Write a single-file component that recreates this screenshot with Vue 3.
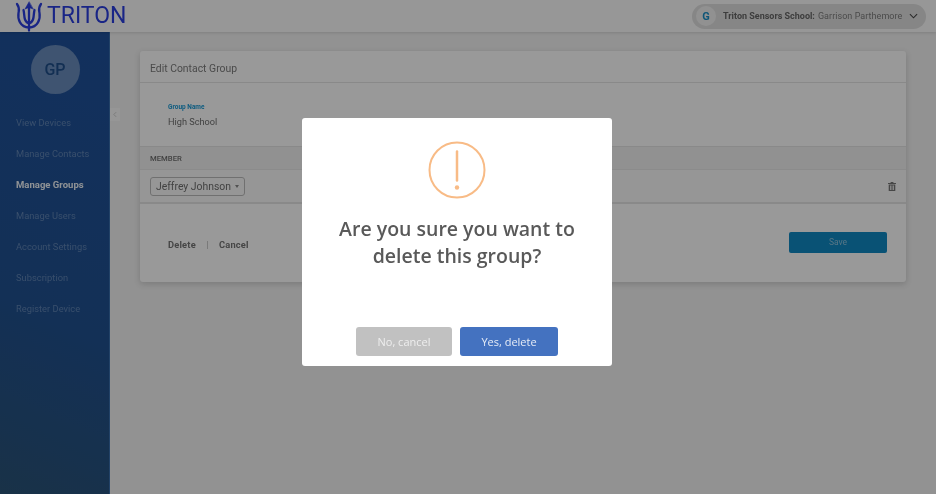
<script setup>
const nav = [
  { label: 'View Devices' },
  { label: 'Manage Contacts' },
  { label: 'Manage Groups', active: true },
  { label: 'Manage Users' },
  { label: 'Account Settings' },
  { label: 'Subscription' },
  { label: 'Register Device' },
]
</script>

<template>
  <div class="root">
    <div class="app">
      <header class="topbar">
        <div class="brand">
          <svg class="trident" viewBox="15 0 28 31" width="28" height="31" fill="none" stroke="#2a3ee0" stroke-width="2.3" stroke-linecap="round">
            <path d="M29 6V29.5" />
            <path d="M29 1L25 8L29 6.5L33 8Z" fill="#2a3ee0" stroke-width="0.6" />
            <path d="M23.5 9C24.5 13 24 16 25 18.5C26 21 27.5 22 29 22C30.5 22 32 21 33 18.5C34 16 33.5 13 34.5 9" />
            <path d="M17 3C20 7 19 9 18.5 12C17.5 18 20 26 29 26.5C38 26 40.5 18 39.5 12C39 9 38 7 41 3" />
          </svg>
          <span class="brand-name">TRITON</span>
        </div>
        <div class="account">
          <span class="account-badge">G</span>
          <span class="account-school">Triton Sensors School:</span>
          <span class="account-user">Garrison Parthemore</span>
          <svg class="chevron" viewBox="0 0 10 6" width="9" height="6" fill="none" stroke="#444" stroke-width="1.2">
            <path d="M1 1L5 5L9 1" />
          </svg>
        </div>
      </header>

      <div class="body">
        <aside class="sidebar">
          <div class="avatar">GP</div>
          <nav class="nav">
            <a v-for="item in nav" :key="item.label" class="nav-item" :class="{ active: item.active }">{{ item.label }}</a>
          </nav>
        </aside>

        <div class="collapse">
          <svg viewBox="0 0 5 8" width="4" height="7" fill="none" stroke="#c4c4c4" stroke-width="1">
            <path d="M4 1L1 4L4 7" />
          </svg>
        </div>

        <main class="main">
          <section class="card">
            <h2 class="card-title">Edit Contact Group</h2>
            <div class="field">
              <label class="field-label">Group Name</label>
              <div class="field-value">High School</div>
            </div>
            <div class="member-head">MEMBER</div>
            <div class="member-row">
              <div class="select">
                <span>Jeffrey Johnson</span>
                <i class="caret"></i>
              </div>
              <svg class="trash" viewBox="0 0 8 9" width="8" height="9" fill="#777">
                <path d="M2.6 0H5.4V1H8V2H0V1H2.6ZM.7 2.6H7.3V9H.7ZM2.2 3.6V8H3V3.6ZM3.6 3.6V8H4.4V3.6ZM5 3.6V8H5.8V3.6Z" fill-rule="evenodd" />
              </svg>
            </div>
            <div class="card-foot">
              <div class="links">
                <a class="link">Delete</a>
                <span class="sep"></span>
                <a class="link">Cancel</a>
              </div>
              <button class="save">Save</button>
            </div>
          </section>
        </main>
      </div>
    </div>

    <div class="overlay">
      <div class="modal">
        <svg class="warn" viewBox="0 0 58 58" width="58" height="58" fill="none" stroke="#f8bb86" stroke-width="2">
          <circle cx="29" cy="29" r="27.5" />
          <path d="M29 10.5V39.5" stroke-linecap="round" stroke-width="2.5" />
          <circle cx="29" cy="46.5" r="2.2" fill="#f8bb86" stroke="none" />
        </svg>
        <h3 class="modal-title">Are you sure you want to<br />delete this group?</h3>
        <div class="modal-actions">
          <button class="btn btn-cancel">No, cancel</button>
          <button class="btn btn-confirm">Yes, delete</button>
        </div>
      </div>
    </div>
  </div>
</template>

<style>
html, body { margin: 0; overflow: hidden; }
</style>

<style scoped>
.root {
  position: relative;
  width: 936px;
  height: 494px;
  overflow: hidden;
  font-family: Roboto, "Liberation Sans", sans-serif;
}
.app {
  width: 936px;
  height: 494px;
  display: flex;
  flex-direction: column;
  background: #f3f3f3;
  filter: blur(0.6px);
}
.topbar {
  height: 32px;
  flex: none;
  display: flex;
  align-items: center;
  justify-content: space-between;
  padding: 0 10px 0 15px;
  background: #fcfcfc;
  box-shadow: 0 1px 3px rgba(0, 0, 0, 0.12);
  box-sizing: border-box;
  position: relative;
  z-index: 1;
}
.brand { display: flex; align-items: center; gap: 4px; }
.brand-name {
  font-size: 23px;
  line-height: 32px;
  color: #2a3ee0;
}
.account {
  width: 234px;
  height: 25px;
  box-sizing: border-box;
  border-radius: 13px;
  background: #e0e0e0;
  display: flex;
  align-items: center;
  padding-left: 4px;
  font-size: 9px;
}
.account-badge {
  width: 20px;
  height: 20px;
  border-radius: 50%;
  background: #f2f2f2;
  color: #1a90c8;
  font-size: 11px;
  font-weight: 700;
  display: flex;
  align-items: center;
  justify-content: center;
  margin-right: 7px;
}
.account-school { font-weight: 700; color: #666; margin-right: 3px; }
.account-user { color: #7c7c7c; letter-spacing: 0.05px; }
.chevron { margin-left: 7px; }
.body { flex: 1; display: flex; min-height: 0; position: relative; }
.sidebar {
  width: 110px;
  flex: none;
  box-sizing: border-box;
  padding-top: 13px;
  background: linear-gradient(205deg, #1f519c 0%, #205090 60%, #2a5478 100%);
  box-shadow: inset -1px 0 0 #3a6eac;
  display: flex;
  flex-direction: column;
}
.avatar {
  width: 49px;
  height: 49px;
  border-radius: 50%;
  margin: 0 auto;
  background: #6a8cbc;
  color: #1f4f8a;
  font-size: 16px;
  font-weight: 500;
  display: flex;
  align-items: center;
  justify-content: center;
}
.nav { display: flex; flex-direction: column; margin-top: 12.5px; }
.nav-item {
  height: 31.1px;
  line-height: 31px;
  padding-left: 16px;
  font-size: 9.3px;
  letter-spacing: 0.02px;
  color: #5f84b4;
  white-space: nowrap;
}
.nav-item.active { color: #eef3f8; font-weight: 700; font-size: 9.5px; }
.collapse {
  position: absolute;
  left: 110px;
  top: 76px;
  width: 10px;
  height: 13px;
  background: #fafafa;
  display: flex;
  align-items: center;
  justify-content: center;
}
.main { flex: 1; padding: 19px 30px 0; box-sizing: border-box; min-width: 0; }
.card {
  height: 231px;
  background: #fff;
  border-radius: 3px;
  box-shadow: 0 2px 6px rgba(0, 0, 0, 0.16);
  display: flex;
  flex-direction: column;
}
.card-title {
  margin: 0;
  height: 32px;
  box-sizing: border-box;
  line-height: 35px;
  padding-left: 10px;
  font-size: 10.4px;
  font-weight: 400;
  color: #7c7c7c;
  border-bottom: 1px solid #e4e4e4;
  flex: none;
}
.field { height: 63px; box-sizing: border-box; padding: 20px 0 0 28px; flex: none; }
.field-label {
  display: block;
  font-size: 6.5px;
  font-weight: 700;
  line-height: 8px;
  color: #1a9ad6;
}
.field-value { font-size: 9.2px; line-height: 14px; margin-top: 4px; color: #6e6e6e; }
.member-head {
  height: 24px;
  line-height: 24px;
  flex: none;
  box-sizing: border-box;
  padding-left: 10px;
  background: #f2f2f2;
  border-top: 1px solid #e4e4e4;
  border-bottom: 1px solid #e8e8e8;
  font-size: 7.7px;
  font-weight: 500;
  color: #6e6e6e;
}
.member-row {
  height: 34px;
  flex: none;
  box-sizing: border-box;
  display: flex;
  align-items: center;
  justify-content: space-between;
  padding: 0 10px;
  background: #fbfbfb;
  border-bottom: 2px solid #e4e4e4;
}
.select {
  width: 95px;
  height: 19px;
  box-sizing: border-box;
  border: 1px solid #bbb;
  border-radius: 3px;
  display: flex;
  align-items: center;
  justify-content: space-between;
  padding: 0 5px;
  font-size: 10.4px;
  color: #6e6e6e;
}
.caret {
  width: 0;
  height: 0;
  border-left: 2.5px solid transparent;
  border-right: 2.5px solid transparent;
  border-top: 3px solid #888;
}
.card-foot {
  flex: 1;
  display: flex;
  align-items: center;
  justify-content: space-between;
  padding: 0 19px 2px 28px;
}
.links { display: flex; align-items: center; gap: 11px; margin-top: 5px; }
.link { font-size: 9.3px; font-weight: 700; color: #757575; letter-spacing: 0.2px; }
.sep { width: 1px; height: 8px; background: #ccc; }
.save {
  width: 98px;
  height: 21px;
  border: 0;
  border-radius: 2px;
  background: #1089c4;
  color: #8fc4de;
  font: 400 8.5px Roboto, sans-serif;
  padding: 0;
}
.overlay {
  position: absolute;
  inset: 0;
  background: rgba(0, 0, 0, 0.4);
  display: flex;
  align-items: center;
  justify-content: center;
  padding: 0 22px 10px 0;
  box-sizing: border-box;
}
.modal {
  width: 310px;
  height: 248px;
  background: #fff;
  border-radius: 3px;
  display: flex;
  flex-direction: column;
  align-items: center;
  box-sizing: border-box;
  padding-top: 23px;
  filter: blur(0.3px);
}
.warn { flex: none; }
.modal-title {
  margin: 16px 0 0;
  font-family: "Open Sans", sans-serif;
  font-size: 19.5px;
  line-height: 27px;
  font-weight: 600;
  color: #595959;
  text-align: center;
}
.modal-actions { margin-top: auto; margin-bottom: 10px; display: flex; gap: 8px; }
.btn {
  height: 29px;
  border: 0;
  border-radius: 3px;
  padding: 0;
  color: #fff;
  font: 400 11px "Open Sans", sans-serif;
}
.btn-cancel { width: 96px; background: #c1c1c1; color: #eee; }
.btn-confirm { width: 98px; background: #4472c0; color: #e6ecf6; }
</style>
